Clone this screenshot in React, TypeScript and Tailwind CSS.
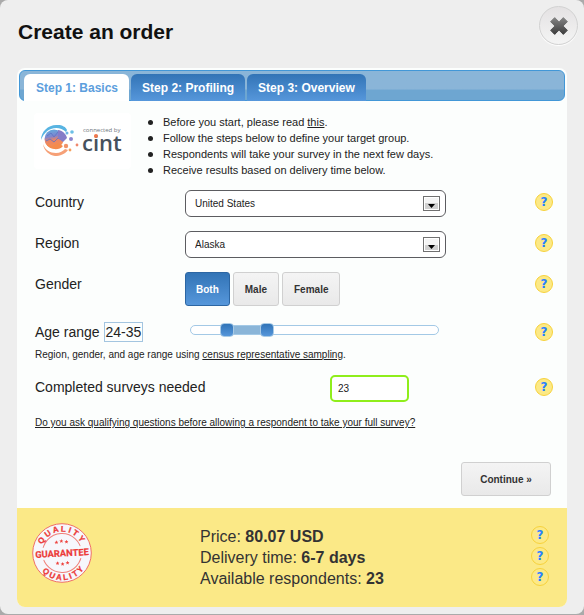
import { useState } from "react";
import type { ReactNode } from "react";

function Help({ label }: { label: string }) {
  return (
    <button
      type="button"
      aria-label={label}
      className="flex size-[18px] shrink-0 items-center justify-center rounded-full border border-[#f7d23c] bg-[#fce986] font-['DejaVu_Sans',sans-serif] text-xs leading-none font-bold text-[#2680ff]"
    >
      ?
    </button>
  );
}

function SelectBox({ id, options }: { id: string; options: string[] }) {
  return (
    <div className="relative w-[261px]">
      <select
        id={id}
        className="block h-[27px] w-full appearance-none rounded-md border border-[#5c5c60] bg-white px-[9px] text-[10px] text-[#222]"
      >
        {options.map((o) => (
          <option key={o}>{o}</option>
        ))}
      </select>
      <span className="pointer-events-none absolute top-1.5 right-1.5 flex h-[15px] w-[17px] items-end justify-center border border-[#707070] bg-linear-to-b from-[#f4f4f4] from-50% to-[#d0d0d0] to-50% pb-0.5 ring-1 ring-white ring-inset">
        <svg width="7" height="4" viewBox="0 0 7 4" aria-hidden="true">
          <path d="M0 0h7L3.5 4z" fill="#000" />
        </svg>
      </span>
    </div>
  );
}

function Row({ label, htmlFor, help, children }: { label: string; htmlFor?: string; help: string; children: ReactNode }) {
  return (
    <div className="flex items-start">
      <div className="w-[150px] pt-[3px] text-sm leading-[18px]">
        {htmlFor ? <label htmlFor={htmlFor}>{label}</label> : <span>{label}</span>}
      </div>
      {children}
      <div className="ml-auto pt-[3px]">
        <Help label={help} />
      </div>
    </div>
  );
}

function CintLogo() {
  return (
    <svg viewBox="0 0 97 56" className="h-14 w-[97px] shrink-0" role="img" aria-label="connected by cint">
      <defs>
        <linearGradient id="swirl" x1="0.1" y1="0" x2="0.3" y2="1">
          <stop offset="0" stopColor="#5fb0e0" />
          <stop offset="0.4" stopColor="#7f86cf" />
          <stop offset="0.6" stopColor="#e98468" />
          <stop offset="1" stopColor="#f7914c" />
        </linearGradient>
      </defs>
      <rect width="97" height="56" rx="4" fill="#fff" />
      <path d="M7 27C7 18 15 11 24 12c4 0 8 2 9 5l-1 2c-4-4-10-5-15-3-5 2-8 6-10 11z" fill="#58b4e2" />
      <path d="M9 31c2 6 7 9 13 9 4 0 7-2 9-4l3 1c-3 4-8 6-13 6C15 42 10 38 9 31z" fill="#f6a077" />
      <circle cx="20" cy="26" r="9.5" fill="url(#swirl)" />
      <path d="M13 23l4-3 3 4 4-5 3 5 2-1M12 28l4-2 4 3 4-4 4 2" fill="none" stroke="#5a72c4" strokeWidth="0.8" />
      <path d="M24 17c4 0 8 4 9 8l-4 4-5-4z" fill="#857cc8" />
      <path d="M12 31l6 2 6-3 5 3c-4 5-13 4-17-2z" fill="#f48b4c" />
      <circle cx="32" cy="33" r="2.2" fill="#f1946a" />
      <circle cx="38" cy="19" r="1.8" fill="#6cbfe6" />
      <circle cx="33" cy="20" r="1.5" fill="#6fb3e4" />
      <circle cx="37" cy="26" r="2" fill="#8c86cf" />
      <circle cx="43" cy="32" r="1.4" fill="#f0876c" />
      <circle cx="36" cy="37" r="1.4" fill="#f6a05c" />
      <text x="49" y="19" fontSize="6" fill="#6f7680" fontFamily="Open Sans, sans-serif">
        connected by
      </text>
      <text x="48" y="38" fontSize="22" fontWeight="600" fill="#46515d" fontFamily="Open Sans, sans-serif">
        cint
      </text>
      <circle cx="62" cy="23" r="2" fill="#f0764c" />
    </svg>
  );
}

function Star({ x, y }: { x: number; y: number }) {
  return (
    <path
      transform={`translate(${x} ${y})`}
      d="M0-2 .6-.6 2-.5.9.4 1.2 1.8 0 1-1.2 1.8-.9.4-2-.5-.6-.6z"
      fill="#ee4440"
    />
  );
}

function Seal() {
  return (
    <svg viewBox="0 0 60 60" className="size-[60px] shrink-0" role="img" aria-label="Quality guarantee">
      <defs>
        <path id="arc-top" d="M8.5 30a21.5 21.5 0 0 1 43 0" />
        <path id="arc-bottom" d="M2.8 30a27.2 27.2 0 0 0 54.4 0" />
      </defs>
      <circle cx="30" cy="30" r="29.3" fill="#f7f7fc" stroke="#ef7068" strokeWidth="1" />
      <g transform="rotate(-3 30 30)" fontFamily="Liberation Sans, Arial, sans-serif" fontWeight="700" fill="#ec3a38">
        <circle cx="30" cy="30" r="19.5" fill="none" stroke="#f0807a" strokeWidth="1" />
        <rect x="4" y="24" width="52" height="12" fill="#f7f7fc" />
        <g fontSize="8" textAnchor="middle" stroke="#ec3a38" strokeWidth="0.3">
          <text>
            <textPath href="#arc-top" startOffset="50%">Q U A L I T Y</textPath>
          </text>
          <text>
            <textPath href="#arc-bottom" startOffset="50%">Q U A L I T Y</textPath>
          </text>
        </g>
        <text
          x="30"
          y="33.5"
          fontSize="9.3"
          textAnchor="middle"
          fontFamily="Liberation Sans Narrow, Roboto, sans-serif"
          stroke="#ec3a38"
          strokeWidth="0.2"
        >
          GUARANTEE
        </text>
        <Star x={25} y={19} />
        <Star x={30} y={18} />
        <Star x={35} y={19} />
        <Star x={25} y={40} />
        <Star x={30} y={41} />
        <Star x={35} y={40} />
      </g>
    </svg>
  );
}

const tabs = ["Step 1: Basics", "Step 2: Profiling", "Step 3: Overview"];
const genders = ["Both", "Male", "Female"];
const MIN_AGE = 16;
const MAX_AGE = 80;

const rangeClass =
  "pointer-events-none absolute inset-x-0 -top-[3px] block h-[14px] w-full appearance-none bg-transparent [&::-webkit-slider-thumb]:pointer-events-auto [&::-webkit-slider-thumb]:h-[14px] [&::-webkit-slider-thumb]:w-[14px] [&::-webkit-slider-thumb]:appearance-none [&::-webkit-slider-thumb]:rounded-sm [&::-webkit-slider-thumb]:border [&::-webkit-slider-thumb]:border-[#a9cbe6] [&::-webkit-slider-thumb]:bg-linear-to-b [&::-webkit-slider-thumb]:from-[#3074b8] [&::-webkit-slider-thumb]:to-[#5596da]";

const greyButton =
  "rounded-[3px] border border-[#d0d0d0] bg-linear-to-b from-[#f4f4f4] to-[#e9e9e9] text-[#333]";

export default function App() {
  const [tab, setTab] = useState(0);
  const [gender, setGender] = useState("Both");
  const [low, setLow] = useState(24);
  const [high, setHigh] = useState(35);
  const [count, setCount] = useState("23");
  const pct = (v: number) => ((v - MIN_AGE) / (MAX_AGE - MIN_AGE)) * 100;

  return (
    <div className="bg-[#aaa] pb-px font-['Liberation_Sans',Arial,sans-serif] text-[#222]">
      <main className="rounded-lg bg-[#eee] px-[17px] pb-[7px]">
        <header className="flex h-[68px] items-start justify-between">
          <h1 className="pt-5 pl-px text-[21px] leading-6 font-bold text-[#111]">Create an order</h1>
          <button
            type="button"
            aria-label="Close"
            className="-mr-[11px] mt-1.5 flex size-[39px] items-center justify-center rounded-full border border-[#d2d2d2] bg-linear-to-b from-[#e4e2e3] to-[#f4f4f4] shadow-[0_1px_1px_#fff]"
          >
            <svg width="18" height="18" viewBox="0 0 18 18" aria-hidden="true">
              <defs>
                <linearGradient id="cross" x1="0" y1="0" x2="0" y2="1">
                  <stop offset="0" stopColor="#858585" />
                  <stop offset="1" stopColor="#3c3c3c" />
                </linearGradient>
              </defs>
              <path
                d="M4.7.6 9 4.9 13.3.6 17.4 4.7 13.1 9l4.3 4.3-4.1 4.1L9 13.1l-4.3 4.3L.6 13.3 4.9 9 .6 4.7z"
                fill="url(#cross)"
                stroke="url(#cross)"
                strokeLinejoin="round"
              />
            </svg>
          </button>
        </header>

        <section className="overflow-hidden rounded-lg bg-[#fcfefd]">
          <div className="px-0.5 pt-0.5">
            <nav
              role="tablist"
              className="flex h-[31px] items-end gap-0.5 rounded-md border border-[#4297d7] bg-linear-to-b from-[#8ab5d8] from-62% to-[#6ea6d1] to-66% pl-1"
            >
              {tabs.map((t, i) => (
                <button
                  key={t}
                  type="button"
                  role="tab"
                  aria-selected={tab === i}
                  onClick={() => setTab(i)}
                  className={
                    tab === i
                      ? "-mb-px h-[27px] rounded-t-md bg-white pr-[11px] pl-3 text-xs font-bold text-[#5c9edd]"
                      : "-mb-px h-[27px] rounded-t-md bg-linear-to-b from-[#3274b6] to-[#5697db] px-[11px] text-xs font-bold text-white"
                  }
                >
                  {t}
                </button>
              ))}
            </nav>
          </div>

          <div className="flex items-start gap-[17px] pt-3 pl-[17px]">
            <CintLogo />
            <ul className="pt-px text-[11px] leading-4">
              {[
                <>
                  Before you start, please read <a href="#this" className="underline">this</a>.
                </>,
                "Follow the steps below to define your target group.",
                "Respondents will take your survey in the next few days.",
                "Receive results based on delivery time below.",
              ].map((item, i) => (
                <li key={i} className="flex items-center gap-2.5">
                  <span className="size-[5px] rounded-full bg-[#222]" />
                  <span>{item}</span>
                </li>
              ))}
            </ul>
          </div>

          <form className="pr-[14px] pl-[18px]" onSubmit={(e) => e.preventDefault()}>
            <div className="flex flex-col gap-[14px] pt-3">
              <Row label="Country" htmlFor="country" help="Help about country">
                <SelectBox id="country" options={["United States", "Canada"]} />
              </Row>
              <Row label="Region" htmlFor="region" help="Help about region">
                <SelectBox id="region" options={["Alaska", "Alabama"]} />
              </Row>
              <Row label="Gender" help="Help about gender">
                <div role="group" aria-label="Gender" className="flex gap-[3px]">
                  {genders.map((g) => (
                    <button
                      key={g}
                      type="button"
                      aria-pressed={gender === g}
                      onClick={() => setGender(g)}
                      className={
                        gender === g
                          ? "h-[34px] rounded-[3px] border border-[#2c66a3] bg-linear-to-b from-[#3274b6] to-[#5697db] px-2.5 text-[10px] font-bold text-white"
                          : `h-[34px] px-[11px] text-[10px] font-bold ${greyButton}`
                      }
                    >
                      {g}
                    </button>
                  ))}
                </div>
              </Row>
            </div>

            <div className="flex items-start pt-4">
              <label htmlFor="age-low" className="w-[155px] text-sm leading-[18px]">
                Age range <output className="inline-block border border-[#a3c5e0] px-px">{low}-{high}</output>
              </label>
              <div className="pt-[3px]">
                <div className="relative h-2.5 w-[249px] rounded-full border border-[#a3c9e6] bg-white">
                  <div
                    className="absolute inset-y-0 bg-[#8ab5d8]"
                    style={{ left: `${pct(low)}%`, width: `${pct(high) - pct(low)}%` }}
                  />
                  <input
                    id="age-low"
                    type="range"
                    min={MIN_AGE}
                    max={MAX_AGE}
                    value={low}
                    onChange={(e) => setLow(Math.min(Number(e.target.value), high))}
                    className={rangeClass}
                  />
                  <input
                    type="range"
                    aria-label="Maximum age"
                    min={MIN_AGE}
                    max={MAX_AGE}
                    value={high}
                    onChange={(e) => setHigh(Math.max(Number(e.target.value), low))}
                    className={rangeClass}
                  />
                </div>
              </div>
              <div className="ml-auto pt-px">
                <Help label="Help about age range" />
              </div>
            </div>
            <p className="pt-1 text-[10px] leading-[18px]">
              Region, gender, and age range using{" "}
              <a href="#sampling" className="underline">census representative sampling</a>.
            </p>

            <div className="flex items-start pt-[11px]">
              <label htmlFor="surveys" className="w-[295px] pt-[3px] text-sm leading-[18px]">
                Completed surveys needed
              </label>
              <input
                id="surveys"
                value={count}
                onChange={(e) => setCount(e.target.value)}
                className="h-[27px] w-[79px] rounded-[5px] border-2 border-[#8fee1b] bg-white px-1.5 text-[10px]"
              />
              <div className="ml-auto pt-[3px]">
                <Help label="Help about completed surveys" />
              </div>
            </div>
            <p className="pt-3 text-[10px] leading-[18px]">
              <a href="#qualifying" className="underline">
                Do you ask qualifying questions before allowing a respondent to take your full survey?
              </a>
            </p>
            <div className="flex justify-end pt-[30px] pr-0.5 pb-3">
              <button type="submit" className={`h-[34px] w-[90px] text-[10px] font-bold ${greyButton}`}>
                Continue »
              </button>
            </div>
          </form>

          <footer className="flex bg-[#fbe987] pt-[15px] pr-[18px] pb-[18px] pl-[15px] text-[#333]">
            <Seal />
            <div className="flex flex-1 flex-col pt-[3px] pl-[108px] text-base leading-[21px]">
              {[
                ["Price:", "80.07 USD"],
                ["Delivery time:", "6-7 days"],
                ["Available respondents:", "23"],
              ].map(([k, v]) => (
                <div key={k} className="flex items-start justify-between">
                  <p>
                    {k} <strong>{v}</strong>
                  </p>
                  <Help label={`Help about ${k}`} />
                </div>
              ))}
            </div>
          </footer>
        </section>
      </main>
    </div>
  );
}
